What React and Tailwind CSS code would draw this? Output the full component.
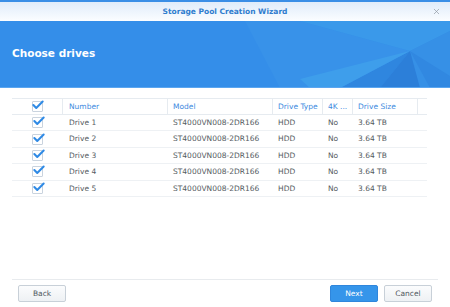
import { Check, X } from 'lucide-react'

const drives = [1, 2, 3, 4, 5].map(n => ({
  number: `Drive ${n}`,
  model: 'ST4000VN008-2DR166',
  type: 'HDD',
  k4: 'No',
  size: '3.64 TB',
}))

function Box() {
  return (
    <div className="w-[11px] h-[11px] border border-[#c9d3de] bg-white rounded-[1px] flex items-center justify-center">
      <Check size={14} strokeWidth={3.5} className="text-[#2f8ae5] -mt-[3px] ml-[2px] shrink-0" />
    </div>
  )
}

const cols = 'grid grid-cols-[51px_105px_105px_50px_30px_65px_9px]'

export default function App() {
  return (
    <div className="w-[450px] h-[307px] bg-white flex flex-col overflow-hidden"
      style={{ fontFamily: '"DejaVu Sans", Verdana, sans-serif' }}>
      <div className="h-[2px] bg-[#3a8ee6]" />

      {/* Title bar */}
      <div className="h-[19px] relative flex items-center justify-center bg-gradient-to-b from-[#e0ecfa] to-[#fbfdff]">
        <span className="text-[7.5px] font-bold text-[#2f7dcf]">Storage Pool Creation Wizard</span>
        <X size={9} strokeWidth={1.8} className="absolute right-[9px] top-[5px] text-[#8c959f]" />
      </div>

      {/* Banner */}
      <div className="h-[67px] relative bg-[#348ee9] border-b border-[#5ba6f0] flex items-center px-[12px] overflow-hidden">
        <svg className="absolute inset-0" width="450" height="67" viewBox="0 0 450 67">
          <polygon points="245,0 300,0 410,30 340,67 280,67" fill="#3892e9" />
          <polygon points="300,0 450,0 450,10 410,30" fill="#3a99ea" />
          <polygon points="340,67 410,30 380,67" fill="#2f86df" />
          <polygon points="410,30 450,10 450,67 420,67" fill="#3690e6" />
          <polygon points="410,30 420,67 380,67" fill="#2c7fd9" />
          <polygon points="300,58 410,30 340,67 310,67" fill="#3e9eeb" />
          <polygon points="410,30 450,55 450,67 430,67" fill="#3188e1" />
        </svg>
        <span className="relative text-white font-bold text-[10.5px]">Choose drives</span>
      </div>

      {/* Table */}
      <div className="flex-1 px-[12px] pt-[10px]">
        <div className="w-[415px] text-[7.5px]">
          <div className={`${cols} h-[17px] border-t border-b border-[#e6ebf0] text-[#3d8ae0]`}>
            <div className="flex items-center justify-center border-r border-[#e6ebf0]"><Box /></div>
            <div className="flex items-center px-[6px] border-r border-[#e6ebf0]">Number</div>
            <div className="flex items-center px-[5px] border-r border-[#e6ebf0]">Model</div>
            <div className="flex items-center px-[5px] border-r border-[#e6ebf0] whitespace-nowrap">Drive Type</div>
            <div className="flex items-center px-[5px] border-r border-[#e6ebf0] whitespace-nowrap">4K ...</div>
            <div className="flex items-center px-[5px] border-r border-[#e6ebf0] whitespace-nowrap">Drive Size</div>
            <div />
          </div>
          {drives.map(d => (
            <div key={d.number} className={`${cols} h-[16.4px] border-b border-[#eef1f4] text-[#555b61]`}>
              <div className="flex items-center justify-center"><Box /></div>
              <div className="flex items-center px-[6px]">{d.number}</div>
              <div className="flex items-center px-[5px]">{d.model}</div>
              <div className="flex items-center px-[5px]">{d.type}</div>
              <div className="flex items-center px-[5px]">{d.k4}</div>
              <div className="flex items-center px-[5px]">{d.size}</div>
              <div />
            </div>
          ))}
        </div>
      </div>

      {/* Footer */}
      <div className="mx-[12px] border-t border-[#e8ebee]" />
      <div className="h-[27px] px-[18px] flex items-center justify-between text-[7.5px]">
        <button className="w-[48px] h-[17px] rounded-[2px] border border-[#c8d0d8] bg-gradient-to-b from-[#fbfcfd] to-[#eef1f4] text-[#505860]">Back</button>
        <div className="flex gap-[6px]">
          <button className="w-[48px] h-[17px] rounded-[2px] border border-[#2f86dc] bg-[#3595ea] text-white">Next</button>
          <button className="w-[48px] h-[17px] rounded-[2px] border border-[#c8d0d8] bg-gradient-to-b from-[#fbfcfd] to-[#eef1f4] text-[#505860]">Cancel</button>
        </div>
      </div>
    </div>
  )
}
